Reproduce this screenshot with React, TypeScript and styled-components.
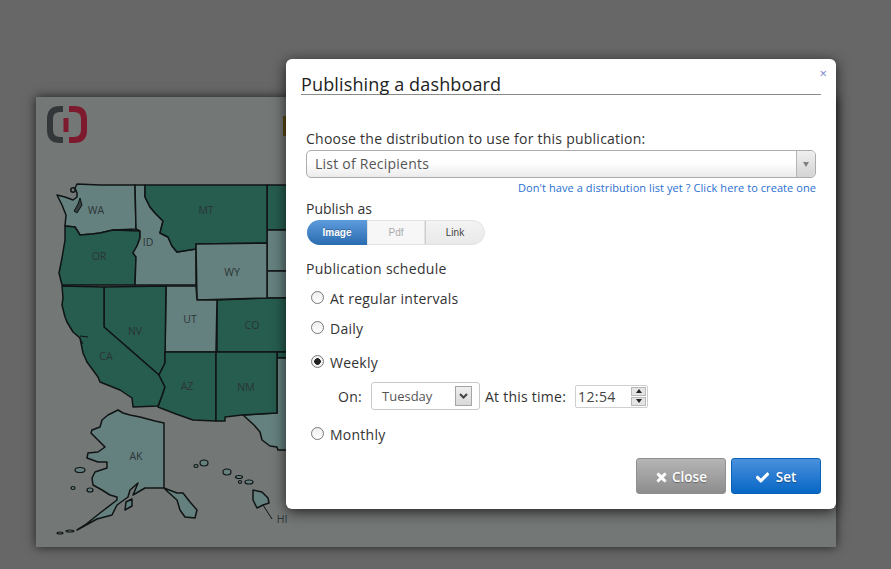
import React from 'react'
import styled, { createGlobalStyle } from 'styled-components'
import { FaCheck, FaTimes } from 'react-icons/fa'

const GlobalStyle = createGlobalStyle`
  html, body {
    margin: 0;
    padding: 0;
    background: #666766;
  }
  body {
    font-family: "Open Sans", "Liberation Sans", sans-serif;
    overflow: hidden;
  }
`

const Page = styled.div`
  position: relative;
  width: 891px;
  height: 569px;
  padding: 97px 0 0 36px;
  box-sizing: border-box;
  overflow: hidden;
`

const DashboardCard = styled.div`
  position: relative;
  width: 800px;
  height: 450px;
  background: #737776;
  box-shadow: 0 0 10px rgba(0, 0, 0, 0.7);
`

const MapDrawing = styled.svg`
  display: block;
  width: 800px;
  height: 450px;
`

const Modal = styled.div`
  position: absolute;
  left: 286px;
  top: 59px;
  width: 550px;
  height: 450px;
  box-sizing: border-box;
  padding: 13px 15px 0 15px;
  background: #fff;
  border-radius: 6px;
  box-shadow: 0 3px 14px rgba(0, 0, 0, 0.7);
  color: #333;
`

const CloseCross = styled.span`
  position: absolute;
  top: 7px;
  right: 9px;
  font-size: 13px;
  line-height: 14px;
  color: #7485cc;
`

const Title = styled.h3`
  margin: 0;
  height: 22px;
  font-size: 18px;
  line-height: 24px;
  font-weight: 400;
  letter-spacing: 0.14px;
  color: #222;
  border-bottom: 1px solid #8a8a8a;
`

const Body = styled.div`
  padding: 34px 5px 0 5px;
`

const FieldLabel = styled.div`
  font-size: 14px;
  line-height: 20px;
  letter-spacing: 0.24px;
  color: #333;
`

const SelectBox = styled.div`
  display: flex;
  align-items: stretch;
  height: 28px;
  box-sizing: border-box;
  margin-top: 1px;
  border: 1px solid #acacac;
  border-radius: 5px;
  background: linear-gradient(#fff 45%, #ebebeb);
  overflow: hidden;
`

const SelectText = styled.span`
  flex: 1;
  padding-left: 8px;
  font-size: 14px;
  line-height: 25px;
  letter-spacing: 0.24px;
  color: #555;
`

const SelectArrow = styled.span`
  display: flex;
  align-items: center;
  justify-content: center;
  width: 18px;
  border-left: 1px solid #b5b5b5;
  background: linear-gradient(#efefef, #d4d4d4);

  &::after {
    content: '';
    border-top: 5px solid #808080;
    border-left: 3.5px solid transparent;
    border-right: 3.5px solid transparent;
  }
`

const HelpLink = styled.a`
  display: block;
  margin-top: 2px;
  text-align: right;
  font-size: 11px;
  line-height: 16px;
  letter-spacing: 0.07px;
  color: #2a6fcf;
`

const PublishLabel = styled(FieldLabel)`
  margin-top: 3px;
  letter-spacing: 0;
`

const Segments = styled.div`
  display: flex;
  width: 178px;
  height: 25px;
  margin: 1px 0 0 1px;
  border-radius: 13px;
  overflow: hidden;
  font-family: "Liberation Sans", Arial, sans-serif;
  font-size: 10px;
  line-height: 25px;
  text-align: center;
`

const Segment = styled.div<{ $kind: 'active' | 'disabled' | 'normal'; $width: number }>`
  box-sizing: border-box;
  width: ${props => props.$width}px;
  border: ${props => (props.$kind === 'active' ? 'none' : '1px solid #e2e2e2')};
  border-left: ${props => (props.$kind === 'normal' ? '1px solid #cfcfcf' : undefined)};
  line-height: ${props => (props.$kind === 'active' ? 25 : 23)}px;
  font-weight: ${props => (props.$kind === 'active' ? 700 : 400)};
  color: ${props => (props.$kind === 'active' ? '#fff' : props.$kind === 'disabled' ? '#aaa' : '#444')};
  background: ${props =>
    props.$kind === 'active'
      ? 'linear-gradient(#5d9bdc, #2a6cb0)'
      : props.$kind === 'disabled'
        ? '#f7f7f7'
        : 'linear-gradient(#f3f3f3, #e9e9e9)'};
  border-radius: ${props => (props.$kind === 'normal' ? '0 13px 13px 0' : '0')};
  text-shadow: ${props => (props.$kind === 'active' ? '0 -1px 0 rgba(0,0,0,0.3)' : 'none')};
`

const ScheduleLabel = styled(FieldLabel)`
  margin-top: 14px;
  letter-spacing: 0.3px;
`

const RadioRow = styled.label<{ $top: number }>`
  display: flex;
  align-items: center;
  gap: 6px;
  margin: ${props => props.$top}px 0 0 5px;
  height: 20px;
  font-size: 14px;
  letter-spacing: 0.24px;
  color: #333;
`

const Radio = styled.input.attrs({ type: 'radio', readOnly: true })`
  appearance: none;
  width: 13px;
  height: 13px;
  margin: -2px 0 0 0;
  box-sizing: border-box;
  border: 1px solid #777;
  border-radius: 50%;
  background: ${props => (props.checked ? 'radial-gradient(circle, #222 0 3px, #f4f4f4 3.6px)' : 'linear-gradient(#eee, #fff)')};
`

const OnRow = styled.div`
  display: flex;
  align-items: center;
  height: 28px;
  margin: 10px 0 0 32px;
  font-size: 14px;
  letter-spacing: 0.24px;
  color: #333;
`

const OnLabel = styled.span`
  width: 33px;
`

const DaySelect = styled.div`
  display: flex;
  align-items: center;
  justify-content: space-between;
  width: 109px;
  height: 28px;
  box-sizing: border-box;
  padding: 0 7px 0 10px;
  border: 1px solid #c9c9c9;
  border-radius: 3px;
  font-size: 13px;
  letter-spacing: 0;
  color: #555;
`

const DayArrow = styled.span`
  display: flex;
  align-items: center;
  justify-content: center;
  width: 15px;
  height: 18px;
  border: 1px solid #a5a5a5;
  background: linear-gradient(#efefef, #d8d8d8);
  color: #444;
`

const TimeLabel = styled.span`
  margin: 0 9px 0 5px;
`

const TimeInput = styled.div`
  display: flex;
  align-items: center;
  justify-content: space-between;
  width: 73px;
  height: 23px;
  box-sizing: border-box;
  padding: 0 1px 0 2px;
  border: 1px solid #cfcfcf;
  border-radius: 2px;
  font-size: 14px;
  letter-spacing: 0.4px;
  color: #444;
`

const Spinner = styled.span`
  display: flex;
  flex-direction: column;
  gap: 1px;
  width: 15px;
`

const SpinButton = styled.span<{ $up?: boolean }>`
  display: flex;
  align-items: center;
  justify-content: center;
  height: 9px;
  background: #e4e4e4;
  border: 1px solid #b8b8b8;
  box-sizing: border-box;

  &::after {
    content: '';
    border-left: 3px solid transparent;
    border-right: 3px solid transparent;
    border-bottom: ${props => (props.$up ? '4px solid #222' : 'none')};
    border-top: ${props => (props.$up ? 'none' : '4px solid #222')};
  }
`

const Footer = styled.div`
  position: absolute;
  right: 15px;
  bottom: 15px;
  display: flex;
  gap: 5px;
`

const ActionButton = styled.button<{ $primary?: boolean }>`
  display: flex;
  align-items: center;
  justify-content: center;
  gap: ${props => (props.$primary ? 7 : 4)}px;
  width: 90px;
  height: 36px;
  padding: 2px 0 0 0;
  border: 1px solid ${props => (props.$primary ? '#0a62b8' : '#8f8f8f')};
  border-radius: 3px;
  background: ${props =>
    props.$primary ? 'linear-gradient(#4a90dc, #0767c6)' : 'linear-gradient(#b5b5b5, #8d8d8d)'};
  color: #fff;
  font-family: "Open Sans", sans-serif;
  font-size: 13.5px;
  font-weight: 600;
  text-shadow: 0 1px 1px rgba(0, 0, 0, 0.35);

  svg {
    font-size: 13px;
    stroke: currentColor;
    stroke-width: 30;
  }
`

const stateLine = { stroke: '#101414', strokeWidth: 1.5, strokeLinejoin: 'round' as const }
const GREEN = '#265d4f'
const LIGHT = '#65817f'

const statesOutline: { id: string; fill: string; d: string }[] = [
  { id: 'ND', fill: GREEN, d: 'M267 185H300V230H267Z' },
  { id: 'SD', fill: LIGHT, d: 'M267 230H300V271H267Z' },
  { id: 'NE', fill: LIGHT, d: 'M267 271H300V298H267Z' },
  { id: 'CO', fill: GREEN, d: 'M217 300L267 298H300V352H217Z' },
  { id: 'OK', fill: GREEN, d: 'M277 352H300V358H277Z' },
  { id: 'TX', fill: LIGHT, d: 'M277 358H300V450H278L277 447L270 446L262 440L260 432L254 425L243 415L277 413Z' },
  { id: 'WA', fill: LIGHT, d: 'M77 184L100 185L135 185L136 229L113 230L100 233L92 234L80 235L75 227L65 226L66 215L62 205L57 195L65 197L73 200L77 197L77 193L75 188Z' },
  { id: 'OR', fill: GREEN, d: 'M65 226L75 227L80 235L92 234L100 233L113 230L140 231L140 238L137 246L133 253L136 257L135 285L62 285L59 273L62 258L65 240Z' },
  { id: 'ID', fill: LIGHT, d: 'M135 185H145V197L150 207L155 213L163 221L160 233L168 237L172 246L177 252L196 249V285H135L136 257L133 253L137 246L140 238L140 231L136 229Z' },
  { id: 'MT', fill: GREEN, d: 'M145 185H267V243L196 244V249L177 252L172 246L168 237L160 233L163 221L155 213L150 207L145 197Z' },
  { id: 'WY', fill: LIGHT, d: 'M196 244L267 243V298L197 300Z' },
  { id: 'UT', fill: LIGHT, d: 'M166 286H196L197 300H217L216 352H165Z' },
  { id: 'NV', fill: GREEN, d: 'M104 287L166 286L165 363L159 375L104 327Z' },
  { id: 'CA', fill: GREEN, d: 'M62 286L104 287V327L159 375L165 387L162 396L158 406L133 407L132 398L120 390L100 382L98 377L87 362L83 353L80 338L73 332L67 322L65 317L62 305L63 298Z' },
  { id: 'AZ', fill: GREEN, d: 'M165 352H216V421L193 420L176 414L158 407L162 396L165 387L159 375L165 363Z' },
  { id: 'NM', fill: GREEN, d: 'M216 352H277V413L242 415L225 417V421H216Z' },
  { id: 'AK', fill: LIGHT, d: 'M118 410L123 413L130 415L140 417L155 421L164 423V488L177 493L183 493L190 502L197 510L195 518L185 517L180 510L177 500L168 492L164 488H153L145 488L133 495L138 483L130 490L128 497L117 505L112 515L97 519L77 530L85 525L100 513L117 500L117 497L110 495L102 490L93 485L92 478L95 472L107 468L107 462L98 462L87 458L88 453L98 452L105 447L100 442L91 433L92 430L100 427L102 420L108 415Z' },
  { id: 'KODIAK', fill: LIGHT, d: 'M126 502L132 499L132 506L125 510Z' },
  { id: 'HI', fill: LIGHT, d: 'M253 490L262 492L268 498L269 503L263 505L257 508L253 500Z' },
]

const islands: [number, number, number, number][] = [
  [80, 470, 5, 2.5],
  [73, 488, 2, 1.5],
  [90, 490, 3, 2],
  [204, 463, 4, 3],
  [196, 466, 2, 1.5],
  [227, 472, 4, 3],
  [239, 477, 3.5, 1.5],
  [240, 482, 1.5, 1.5],
  [249, 482, 4, 2],
  [70, 531, 4, 1],
  [60, 533, 3, 1],
]

const stateLabels: [string, number, number][] = [
  ['WA', 96, 214],
  ['MT', 206, 214],
  ['OR', 99, 260],
  ['ID', 148, 246],
  ['WY', 232, 276],
  ['UT', 190, 323],
  ['CO', 252, 329],
  ['NV', 135, 335],
  ['CA', 106, 360],
  ['AZ', 187, 390],
  ['NM', 246, 391],
  ['AK', 136, 460],
  ['HI', 282, 523],
]

const UsMap: React.FC = () => (
  <MapDrawing viewBox="36 97 800 450">
    <g fill="none" strokeLinecap="butt">
      <path d="M63 109H60Q50 109 50 119V130Q50 140 60 140H63" stroke="#33373a" strokeWidth="6" />
      <path d="M69 109H74Q84 109 84 119V130Q84 140 74 140H69" stroke="#7d1a2e" strokeWidth="6" />
      <path d="M66 118V132" stroke="#7d1a2e" strokeWidth="5" />
    </g>
    <rect x="283" y="116" width="6" height="20" fill="#5c4a14" />
    {statesOutline.map(state => (
      <path key={state.id} d={state.d} fill={state.fill} {...stateLine} />
    ))}
    {/* puget sound and the small islands */}
    <circle cx="73" cy="190" r="2.2" fill="none" {...stateLine} />
    <path d="M80 198L82 205L77 213L74 211L78 204Z" fill="#33403f" {...stateLine} strokeWidth={1} />
    <path d="M80 336L88 337M79 337L83 344" fill="none" {...stateLine} strokeWidth={1} />
    {islands.map(([cx, cy, rx, ry]) => (
      <ellipse key={`${cx}-${cy}`} cx={cx} cy={cy} rx={rx} ry={ry} fill={LIGHT} {...stateLine} strokeWidth={1.2} />
    ))}
    <path d="M263 505L272 519" stroke="#101414" strokeWidth="1" />
    {stateLabels.map(([name, x, y]) => (
      <text
        key={name}
        x={x}
        y={y}
        textAnchor="middle"
        fontFamily="'Open Sans', sans-serif"
        fontSize="10.5"
        fill="#2b3436"
      >
        {name}
      </text>
    ))}
  </MapDrawing>
)

const App: React.FC = () => (
  <Page>
    <GlobalStyle />
    <DashboardCard>
      <UsMap />
    </DashboardCard>
    <Modal>
      <CloseCross>×</CloseCross>
      <Title>Publishing a dashboard</Title>
      <Body>
        <FieldLabel>Choose the distribution to use for this publication:</FieldLabel>
        <SelectBox>
          <SelectText>List of Recipients</SelectText>
          <SelectArrow />
        </SelectBox>
        <HelpLink>Don't have a distribution list yet ? Click here to create one</HelpLink>
        <PublishLabel>Publish as</PublishLabel>
        <Segments>
          <Segment $kind="active" $width={60}>Image</Segment>
          <Segment $kind="disabled" $width={58}>Pdf</Segment>
          <Segment $kind="normal" $width={60}>Link</Segment>
        </Segments>
        <ScheduleLabel>Publication schedule</ScheduleLabel>
        <RadioRow $top={9}>
          <Radio name="schedule" />
          At regular intervals
        </RadioRow>
        <RadioRow $top={10}>
          <Radio name="schedule" />
          Daily
        </RadioRow>
        <RadioRow $top={14}>
          <Radio name="schedule" checked />
          Weekly
        </RadioRow>
        <OnRow>
          <OnLabel>On:</OnLabel>
          <DaySelect>
            Tuesday
            <DayArrow>
              <svg width="9" height="6" viewBox="0 0 9 6">
                <path d="M1 1L4.5 4.5L8 1" fill="none" stroke="#444" strokeWidth="2" />
              </svg>
            </DayArrow>
          </DaySelect>
          <TimeLabel>At this time:</TimeLabel>
          <TimeInput>
            12:54
            <Spinner>
              <SpinButton $up />
              <SpinButton />
            </Spinner>
          </TimeInput>
        </OnRow>
        <RadioRow $top={14}>
          <Radio name="schedule" />
          Monthly
        </RadioRow>
      </Body>
      <Footer>
        <ActionButton>
          <FaTimes />
          Close
        </ActionButton>
        <ActionButton $primary>
          <FaCheck />
          Set
        </ActionButton>
      </Footer>
    </Modal>
  </Page>
)

export default App
